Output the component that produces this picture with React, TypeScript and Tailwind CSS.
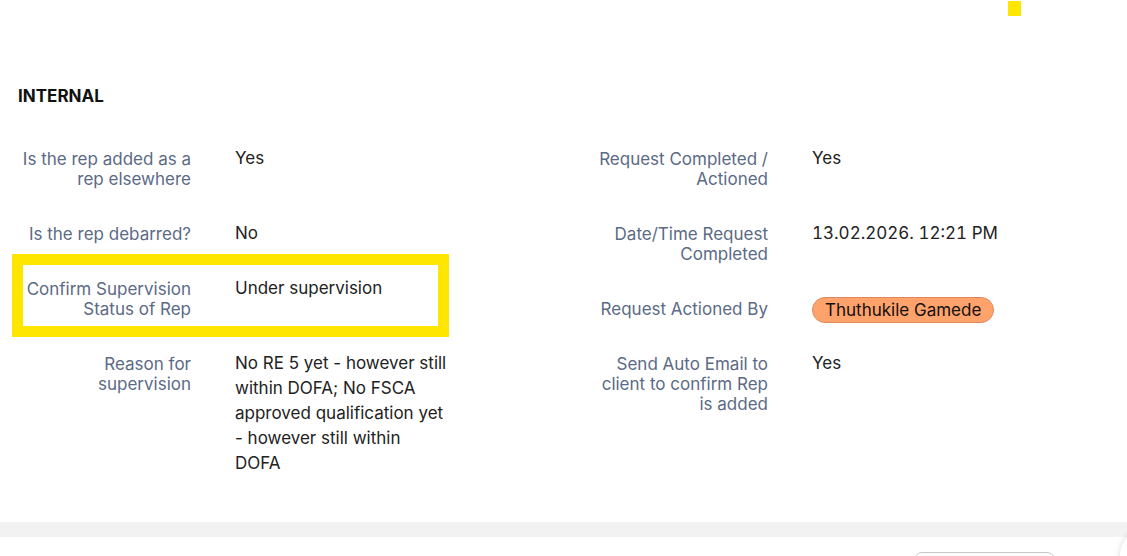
import React from "react";

type Field = { label: string; value: React.ReactNode };

const left: Field[] = [
  { label: "Is the rep added as a rep elsewhere", value: "Yes" },
  { label: "Is the rep debarred?", value: "No" },
  { label: "Confirm Supervision Status of Rep", value: "Under supervision" },
  {
    label: "Reason for supervision",
    value: "No RE 5 yet - however still within DOFA; No FSCA approved qualification yet - however still within DOFA",
  },
];

const right: Field[] = [
  { label: "Request Completed / Actioned", value: "Yes" },
  { label: "Date/Time Request Completed", value: <span className="tabular-nums">13.02.2026. 12:21 PM</span> },
  {
    label: "Request Actioned By",
    value: (
      <span className="mt-px -mb-[2px] inline-block rounded-full border border-[#e0875a] bg-[#ffa26c] px-[12px] py-[2px] align-top leading-[20px] text-[#111]">
        Thuthukile Gamede
      </span>
    ),
  },
  { label: "Send Auto Email to client to confirm Rep is added", value: "Yes" },
];

function FieldColumn({ fields }: { fields: Field[] }) {
  return (
    <div className="flex w-[577px] shrink-0 flex-col gap-[35px]">
      {fields.map(f => (
        <div key={f.label} className="flex gap-[44px]">
          <div className="w-[171px] shrink-0 text-right leading-[20px] text-[#5b6a86]">{f.label}</div>
          <div className="-mt-[3px] -mb-[2px] w-[213px] leading-[25px] text-[#222]">{f.value}</div>
        </div>
      ))}
    </div>
  );
}

export default function App() {
  return (
    <div
      className="relative flex h-[556px] w-[1127px] flex-col overflow-hidden bg-white text-[17px] leading-[20px]"
      style={{ fontFamily: "Inter, 'Noto Sans', sans-serif" }}
    >
      {/* stray highlight marker top right */}
      <div className="absolute left-[1008px] top-[1px] h-[15px] w-[13px] bg-[#ffe600]" />

      <section className="h-[522px] shrink-0 pt-[86px]">
        <h2 className="pl-[18px] text-[17px] font-bold leading-[20px] text-[#111]">INTERNAL</h2>
        <div className="mt-[43px] flex pl-[20px]">
          <FieldColumn fields={left} />
          <FieldColumn fields={right} />
        </div>
      </section>

      {/* footer band */}
      <div className="h-[15px] shrink-0 bg-[#f2f2f2]" />
      <div className="flex justify-end pr-[72px] pt-[15px]">
        <div className="h-[30px] w-[141px] rounded-[8px] border border-[#c8c8c8] bg-white" />
      </div>

      {/* highlight annotation */}
      <div className="absolute left-[12px] top-[254px] h-[83px] w-[437px] border-[11px] border-[#ffe600]" />

      {/* floating round button */}
      <div className="absolute left-[1120px] top-[530px] h-[50px] w-[50px] rounded-full bg-white shadow-[0_0_6px_rgba(0,0,0,0.15)]" />
    </div>
  );
}
